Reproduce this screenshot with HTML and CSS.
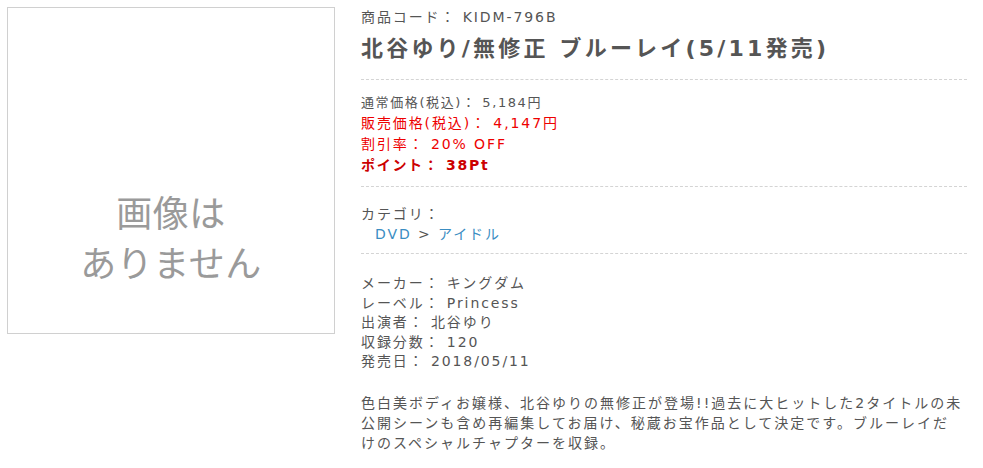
FILE: index.html
```html
<!DOCTYPE html>
<html lang="ja">
<head>
<meta charset="utf-8">
<link rel="stylesheet" href="styles.css">
</head>
<body>
<div class="product">
  <div class="photo">
    <div class="noimage">画像は<br>ありません</div>
  </div>
  <div class="info">
    <div class="code">商品コード： KIDM-796B</div>
    <h1 class="title">北谷ゆり/無修正 ブルーレイ(5/11発売)</h1>
    <div class="section prices">
      <div class="list-price">通常価格(税込)： 5,184円</div>
      <div class="sale">販売価格(税込)： 4,147円</div>
      <div class="sale">割引率： 20% OFF</div>
      <div class="point">ポイント： 38Pt</div>
    </div>
    <div class="section category">
      <div>カテゴリ：</div>
      <div class="crumbs"><a>DVD</a> &gt; <a>アイドル</a></div>
    </div>
    <div class="section specs">
      <div>メーカー： キングダム</div>
      <div>レーベル： Princess</div>
      <div>出演者： 北谷ゆり</div>
      <div>収録分数： 120</div>
      <div>発売日： 2018/05/11</div>
      <p class="desc">色白美ボディお嬢様、北谷ゆりの無修正が登場!!過去に大ヒットした2タイトルの未公開シーンも含め再編集してお届け、秘蔵お宝作品として決定です。ブルーレイだ<br>けのスペシャルチャプターを収録。</p>
    </div>
  </div>
</div>
</body>
</html>
```

FILE: styles.css
```css
html, body {
  margin: 0;
  padding: 0;
  background: #fff;
}
body {
  font-family: "DejaVu Sans", "Noto Sans CJK JP", sans-serif;
  color: #555;
  font-size: 14px;
  letter-spacing: 1.9px;
}
.product {
  display: flex;
  padding: 7px 0 0 7px;
  gap: 26px;
}
.photo {
  width: 326px;
  height: 325px;
  border: 1px solid #d0d0d0;
  display: flex;
  align-items: flex-end;
  justify-content: center;
  flex-shrink: 0;
}
.noimage {
  font-family: "Noto Sans CJK JP", sans-serif;
  color: #9a9a9a;
  font-size: 36px;
  line-height: 50px;
  letter-spacing: 0.5px;
  text-align: center;
  margin-bottom: 47px;
}
.info {
  width: 606px;
}
.code {
  font-size: 14px;
  line-height: 20px;
}
.title {
  margin: 7px 0 0;
  font-size: 22px;
  line-height: 30px;
  font-weight: bold;
  color: #555;
  letter-spacing: 3.2px;
  padding-bottom: 15px;
}
.section {
  border-top: 1px dashed #d4d4d4;
}
.prices {
  padding: 12px 0 10px;
  line-height: 21px;
  font-size: 14px;
}
.list-price {
  font-size: 13px;
  letter-spacing: 1.6px;
}
.sale {
  color: #e00;
}
.point {
  color: #c00;
  font-weight: bold;
  letter-spacing: 1.7px;
}
.category {
  padding: 17px 0 9px;
  line-height: 20px;
}
.crumbs {
  padding-left: 14px;
}
.crumbs a {
  color: #3a8dc2;
}
.specs {
  padding: 20px 0 0;
  line-height: 19.5px;
}
.desc {
  margin: 21px 0 0;
  line-height: 20px;
  letter-spacing: 2px;
  width: 606px;
}
```
